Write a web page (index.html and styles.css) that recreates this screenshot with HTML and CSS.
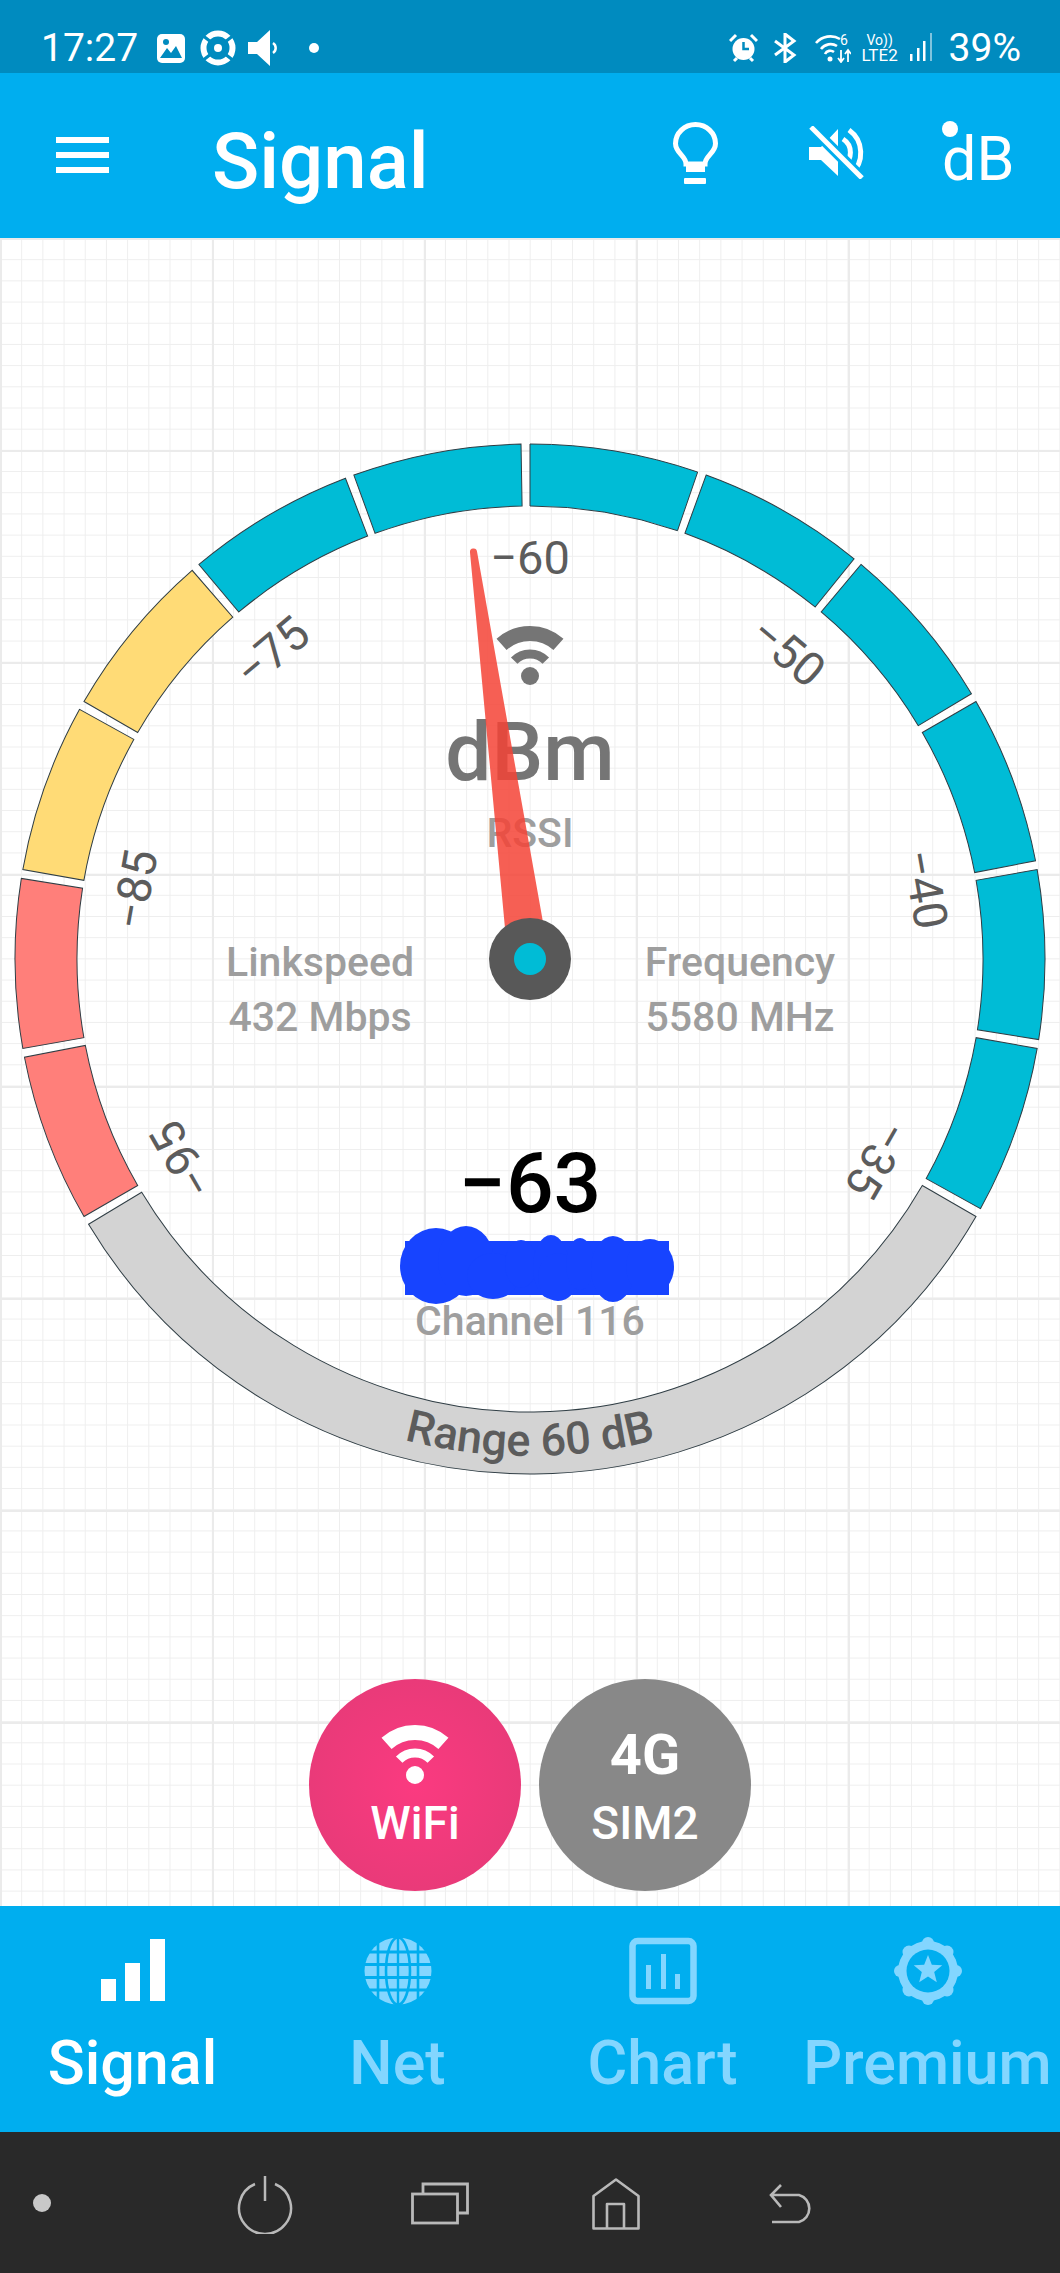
FILE: index.html
```html
<!DOCTYPE html>
<html lang="en">
<head>
    <meta charset="UTF-8">
    <meta name="viewport" content="width=device-width, initial-scale=1.0">
    <title>Signal</title>
    <link rel="stylesheet" href="styles.css">
</head>
<body>
<div class="phone">
    <div class="status-bar">
        <span class="status-time">17:27</span>
        <svg class="st-picture" width="28" height="29" viewBox="0 0 28 29"><rect width="28" height="29" rx="5" fill="#fff"/><path d="M3 24 L10 14 L14 19 L19 12 L25 24 Z" fill="#008bbf"/><circle cx="9" cy="8" r="3" fill="#008bbf"/></svg>
        <svg class="st-target" width="38" height="36" viewBox="0 0 38 36"><circle cx="19" cy="18" r="14.5" fill="none" stroke="#fff" stroke-width="6"/><circle cx="19" cy="18" r="4" fill="#fff"/><path d="M3 5 L12 12 M35 5 L26 12 M3 31 L12 24 M35 31 L26 24" stroke="#008bbf" stroke-width="3"/></svg>
        <svg class="st-speaker" width="32" height="36" viewBox="0 0 32 36"><path d="M0 12 H9 L22 0 V36 L9 24 H0 Z" fill="#fff"/><path d="M25 13 A6 6 0 0 1 25 23" fill="none" stroke="#fff" stroke-width="2.5"/></svg>
        <span class="status-dot"></span>
        <span class="status-spacer"></span>
        <svg class="st-alarm" width="29" height="30" viewBox="0 0 29 30"><circle cx="14.5" cy="16" r="11" fill="#fff"/><path d="M14.5 9 V16 H20" fill="none" stroke="#008bbf" stroke-width="2.5"/><path d="M1 8 L7 2 M28 8 L22 2 M5 28 L8 25 M24 28 L21 25" stroke="#fff" stroke-width="3"/></svg>
        <svg class="st-bluetooth" width="25" height="30" viewBox="0 0 25 30"><path d="M2 8 L21 22 L12 29 V1 L21 8 L2 22" fill="none" stroke="#fff" stroke-width="3"/></svg>
        <svg class="st-wifi" width="36" height="30" viewBox="0 0 36 30"><path d="M1 10 A19 19 0 0 1 25 6 M6 16 A12 12 0 0 1 22 13 M10 21 A6 6 0 0 1 19 19" fill="none" stroke="#fff" stroke-width="2.6"/><circle cx="15" cy="26" r="2.5" fill="#fff"/><path d="M26 17 V28 M23 25 L26 29 L29 25 M33 29 V18 M30 21 L33 17 L36 21" fill="none" stroke="#fff" stroke-width="1.8"/><text x="25" y="12" class="st-six">6</text></svg>
        <span class="st-lte"><span class="st-vo">Vo))</span><span class="st-lte2">LTE2</span></span>
        <svg class="st-bars" width="24" height="30" viewBox="0 0 24 30"><path d="M1 21 H3.5 V28 H1 Z M8 15 H10.5 V28 H8 Z M14 8 H16.5 V28 H14 Z" fill="#fff"/><path d="M21 0 H23 V28 H21 Z" fill="#7fc4de"/></svg>
        <span class="status-battery">39%</span>
    </div>

    <header class="app-bar">
        <div class="menu-icon"><span></span><span></span><span></span></div>
        <h1 class="app-title">Signal</h1>
        <svg class="bulb-icon" width="45" height="62" viewBox="0 0 45 62">
            <path d="M13 42 C13 34 2.5 31 2.5 21.5 A20 19 0 0 1 42.5 21.5 C42.5 31 32 34 32 42 Z" fill="none" stroke="#fff" stroke-width="5"/>
            <rect x="13" y="41" width="19" height="9" fill="#fff"/>
            <rect x="11" y="56" width="22" height="6" rx="1" fill="#fff"/>
        </svg>
        <svg class="mute-icon" width="55" height="53" viewBox="0 0 55 53">
            <path d="M0 21 H12 L29 3 V50 L12 34 H0 Z" fill="#fff"/>
            <path d="M34 13 A16 16 0 0 1 34 40 M40 4 A28 28 0 0 1 42 48" fill="none" stroke="#fff" stroke-width="5"/>
            <path d="M2 1 L53 52" stroke="#00aeef" stroke-width="11"/>
            <path d="M2 1 L53 52" stroke="#fff" stroke-width="5"/>
        </svg>
        <div class="db-toggle"><span class="db-dot"></span>dB</div>
    </header>

    <main class="canvas">
        <svg class="gauge" width="1060" height="1060" viewBox="0 0 1060 1060">
            <defs>
                <path id="seg" d="M530 15 A515 515 0 0 1 697.67 43.06 L677.48 101.68 A453 453 0 0 0 530 77 Z"/>
                <path id="range-seg" d="M530 15 A515 515 0 0 1 980.43 779.68 L926.2 749.62 A453 453 0 0 0 530 77 Z"/>
                <path id="range-curve" d="M33 530 A497 497 0 0 0 1027 530"/>
                <symbol id="wifi-icon" viewBox="0 0 68 60">
                    <path d="M5.56 18.42 A42.5 42.5 0 0 1 62.44 18.42" fill="none" stroke="currentColor" stroke-width="15"/>
                    <path d="M18.2 34.7 A22 22 0 0 1 49.8 34.7" fill="none" stroke="currentColor" stroke-width="9"/>
                    <circle cx="34" cy="50" r="9" fill="currentColor"/>
                </symbol>
            </defs>

            <use href="#seg" class="seg-cyan"/>
            <use href="#seg" class="seg-cyan" transform="rotate(20 530 530)"/>
            <use href="#seg" class="seg-cyan" transform="rotate(40 530 530)"/>
            <use href="#seg" class="seg-cyan" transform="rotate(60 530 530)"/>
            <use href="#seg" class="seg-cyan" transform="rotate(80 530 530)"/>
            <use href="#seg" class="seg-cyan" transform="rotate(100 530 530)"/>
            <use href="#range-seg" class="seg-grey" transform="rotate(120 530 530)"/>
            <use href="#seg" class="seg-red" transform="rotate(240 530 530)"/>
            <use href="#seg" class="seg-red" transform="rotate(260 530 530)"/>
            <use href="#seg" class="seg-yellow" transform="rotate(280 530 530)"/>
            <use href="#seg" class="seg-yellow" transform="rotate(300 530 530)"/>
            <use href="#seg" class="seg-cyan" transform="rotate(320 530 530)"/>
            <use href="#seg" class="seg-cyan" transform="rotate(340 530 530)"/>

            <text class="tick" x="530" y="145">−60</text>
            <text class="tick" x="530" y="145" transform="rotate(40 530 530)">−50</text>
            <text class="tick" x="530" y="145" transform="rotate(80 530 530)">−40</text>
            <text class="tick" x="530" y="145" transform="rotate(120 530 530)">−35</text>
            <text class="tick" x="530" y="145" transform="rotate(240 530 530)">−95</text>
            <text class="tick" x="530" y="145" transform="rotate(280 530 530)">−85</text>
            <text class="tick" x="530" y="145" transform="rotate(320 530 530)">−75</text>

            <text class="range-label"><textPath href="#range-curve" startOffset="50%">Range 60 dB</textPath></text>

            <use href="#wifi-icon" class="gauge-wifi" x="496" y="197" width="68" height="60"/>
            <text class="unit" x="530" y="351">dBm</text>
            <text class="info" x="530" y="418">RSSI</text>
            <text class="info" x="320" y="547">Linkspeed</text>
            <text class="info" x="320" y="602">432 Mbps</text>
            <text class="info" x="740" y="547">Frequency</text>
            <text class="info" x="740" y="602">5580 MHz</text>
            <text class="reading" x="530" y="783">−63</text>

            <!-- scribbled out network name -->
            <g class="scribble">
                <rect x="405" y="812" width="264" height="54"/>
                <ellipse cx="436" cy="837" rx="36" ry="38"/>
                <ellipse cx="466" cy="832" rx="28" ry="35"/>
                <ellipse cx="493" cy="847" rx="26" ry="23"/>
                <ellipse cx="521" cy="835" rx="16" ry="24"/>
                <ellipse cx="551" cy="838" rx="18" ry="32"/>
                <ellipse cx="558" cy="848" rx="20" ry="24"/>
                <ellipse cx="580" cy="835" rx="14" ry="26"/>
                <ellipse cx="613" cy="840" rx="22" ry="33"/>
                <ellipse cx="650" cy="838" rx="24" ry="28"/>
            </g>
            <text class="info" x="530" y="906">Channel 116</text>

            <path class="needle" d="M470 123.5 A3.5 3.5 0 0 1 477 122.5 L546 510 L506 510 Z"/>
            <circle class="hub" cx="530" cy="530" r="41"/>
            <circle class="hub-dot" cx="530" cy="530" r="16"/>
        </svg>

        <div class="modes">
            <div class="mode mode-wifi">
                <svg class="mode-icon" width="68" height="60"><use href="#wifi-icon" width="68" height="60"/></svg>
                <span class="mode-sub">WiFi</span>
            </div>
            <div class="mode mode-sim">
                <span class="mode-big">4G</span>
                <span class="mode-sub">SIM2</span>
            </div>
        </div>
    </main>

    <nav class="tabs">
        <div class="tab tab-active">
            <svg width="68" height="68" viewBox="0 0 68 68"><path d="M2 42 H17 V64 H2 Z M26 26 H41 V64 H26 Z M51 2 H66 V64 H51 Z" fill="currentColor"/></svg>
            <span>Signal</span>
        </div>
        <div class="tab">
            <svg width="68" height="68" viewBox="0 0 68 68">
                <circle cx="34" cy="34" r="33.5" fill="currentColor"/>
                <path d="M0 15 H68 M0 27.5 H68 M0 40.5 H68 M0 53 H68" stroke="#00aeef" stroke-width="3"/>
                <path d="M34 0 V68" stroke="#00aeef" stroke-width="2.4"/>
                <ellipse cx="34" cy="34" rx="12" ry="33.5" fill="none" stroke="#00aeef" stroke-width="2.6"/>
                <path d="M14 0 V68 M54 0 V68" stroke="#00aeef" stroke-width="2.6"/>
            </svg>
            <span>Net</span>
        </div>
        <div class="tab">
            <svg width="68" height="68" viewBox="0 0 68 68">
                <rect x="3.5" y="4" width="61" height="60" rx="5" fill="none" stroke="currentColor" stroke-width="6.5"/>
                <path d="M17 28 H22 V52 H17 Z M32 17 H37 V52 H32 Z M46 37 H51 V52 H46 Z" fill="currentColor"/>
            </svg>
            <span>Chart</span>
        </div>
        <div class="tab">
            <svg width="68" height="68" viewBox="0 0 68 68">
                <g fill="currentColor">
                    <circle cx="34" cy="34" r="30"/>
                    <circle cx="34" cy="6" r="6"/>
                    <circle cx="53" cy="15" r="6.5"/>
                    <circle cx="62" cy="34" r="6"/>
                    <circle cx="53" cy="53" r="6.5"/>
                    <circle cx="34" cy="62" r="6"/>
                    <circle cx="15" cy="53" r="6.5"/>
                    <circle cx="6" cy="34" r="6"/>
                    <circle cx="15" cy="15" r="6.5"/>
                </g>
                <circle cx="34" cy="34" r="21.5" fill="#00aeef"/>
                <path d="M34 18 L37.82 27.74 L48.27 28.36 L40.18 35.01 L42.82 45.14 L34 39.5 L25.18 45.14 L27.82 35.01 L19.73 28.36 L30.18 27.74 Z" fill="currentColor"/>
            </svg>
            <span>Premium</span>
        </div>
    </nav>

    <div class="nav-bar">
        <span class="nav-dot"></span>
        <svg class="nav-power" width="56" height="58" viewBox="0 0 56 58"><path d="M18 8 A26 26 0 1 0 38 8 M28 0 V25" fill="none" stroke="#b9b9b9" stroke-width="2.5"/></svg>
        <svg class="nav-recent" width="58" height="43" viewBox="0 0 58 43"><rect x="1.5" y="12" width="45" height="29" fill="none" stroke="#b9b9b9" stroke-width="2.8"/><path d="M12 11 V2 H56.5 V31 H47" fill="none" stroke="#b9b9b9" stroke-width="2.8"/></svg>
        <svg class="nav-home" width="48" height="52" viewBox="0 0 48 52"><path d="M1.5 50.5 V18 L24 1.5 L46.5 18 V50.5 Z M15 50.5 V26 H32 V50.5" fill="none" stroke="#b9b9b9" stroke-width="2.6" stroke-linejoin="round"/></svg>
        <svg class="nav-back" width="48" height="40" viewBox="0 0 48 40"><path d="M3 38 H30 A14 14 0 0 0 30 11 H2 M12 1 L2 11 L12 23" fill="none" stroke="#b9b9b9" stroke-width="2.6"/></svg>
    </div>
</div>
</body>
</html>
```

FILE: styles.css
```css
* {
    box-sizing: border-box;
}
body {
    margin: 0;
    font-family: Roboto, "Noto Sans", sans-serif;
    background-color: #fff;
}
.phone {
    display: flex;
    flex-direction: column;
    width: 1060px;
    height: 2273px;
    overflow: hidden;
}

/* status bar */
.status-bar {
    display: flex;
    align-items: center;
    height: 73px;
    padding: 23px 39px 0 41px;
    background-color: #008bbf;
    color: #fff;
}
.status-time {
    font-size: 39px;
    line-height: 50px;
}
.st-picture {
    margin-left: 19px;
}
.st-target {
    margin-left: 14px;
}
.st-speaker {
    margin-left: 11px;
}
.status-dot {
    width: 10px;
    height: 10px;
    margin-left: 29px;
    border-radius: 50%;
    background-color: #fff;
}
.status-spacer {
    flex: 1;
}
.st-bluetooth {
    margin-left: 15px;
}
.st-wifi {
    margin-left: 17px;
}
.st-six {
    font-size: 14px;
    fill: #fff;
}
.st-lte {
    display: flex;
    flex-direction: column;
    align-items: center;
    width: 40px;
    margin-left: 9px;
    font-size: 17px;
    line-height: 15px;
}
.st-vo {
    font-size: 14px;
}
.st-bars {
    margin-left: 9px;
}
.status-battery {
    margin-left: 16px;
    font-size: 39px;
    line-height: 50px;
}

/* app bar */
.app-bar {
    display: flex;
    align-items: center;
    height: 165px;
    padding-top: 12px;
    background-color: #00aeef;
    color: #fff;
}
.menu-icon {
    display: flex;
    flex-direction: column;
    gap: 8.5px;
    width: 53px;
    margin-left: 56px;
    margin-top: -13px;
}
.menu-icon span {
    height: 6.5px;
    background-color: #fff;
}
.app-title {
    flex: 1;
    margin: 0 0 0 103px;
    font-size: 78px;
    font-weight: 500;
    line-height: 90px;
}
.bulb-icon {
    margin-top: -17px;
}
.mute-icon {
    margin-left: 91px;
    margin-top: -19px;
}
.db-toggle {
    position: relative;
    width: 71px;
    margin-left: 78px;
    margin-right: 47px;
    margin-top: -5px;
    font-size: 61px;
    line-height: 70px;
    font-weight: 400;
}
.db-dot {
    position: absolute;
    left: 0;
    top: -3px;
    width: 16px;
    height: 16px;
    border-radius: 50%;
    background-color: #fff;
}

/* gauge */
.canvas {
    display: flex;
    flex-direction: column;
    flex: 1;
    background-color: #fff;
    background-image:
        linear-gradient(#ebebeb 2px, transparent 2px),
        linear-gradient(90deg, #ebebeb 2px, transparent 2px),
        linear-gradient(#eeeeee 1px, transparent 1px),
        linear-gradient(90deg, #eeeeee 1px, transparent 1px);
    background-size: 212px 212px, 212px 212px, 21.2px 21.2px, 21.2px 21.2px;
}
.gauge {
    display: block;
    flex: none;
    margin-top: 191px;
}
.gauge text {
    font-family: Roboto, sans-serif;
    text-anchor: middle;
}
.seg-cyan,
.seg-yellow,
.seg-red,
.seg-grey {
    stroke: #2f3d44;
    stroke-width: 1;
}
.seg-cyan {
    fill: #00bcd6;
}
.seg-yellow {
    fill: #ffdb76;
}
.seg-red {
    fill: #ff7f7a;
}
.seg-grey {
    fill: #d3d3d3;
}
.tick {
    font-size: 47px;
    fill: #5c5c5c;
}
.range-label {
    font-size: 45px;
    font-weight: 500;
    fill: #5c5c5c;
}
.gauge-wifi {
    color: #757575;
}
.unit {
    font-size: 82px;
    font-weight: 500;
    fill: #757575;
}
.info {
    font-size: 41px;
    font-weight: 500;
    fill: #9e9e9e;
}
.reading {
    font-size: 84px;
    font-weight: 500;
    fill: #000;
}
.scribble {
    fill: #1744ff;
}
.needle {
    fill: rgba(244, 67, 54, 0.85);
}
.hub {
    fill: #585858;
}
.hub-dot {
    fill: #00bcd6;
}

/* wifi / sim buttons */
.modes {
    display: flex;
    justify-content: center;
    gap: 18px;
    margin-top: 190px;
}
.mode {
    display: flex;
    flex-direction: column;
    align-items: center;
    justify-content: center;
    gap: 12px;
    width: 212px;
    height: 212px;
    padding-top: 4px;
    border-radius: 50%;
    color: #fff;
}
.mode-wifi {
    background: radial-gradient(circle, #fb3a80 0%, #e23a76 100%);
}
.mode-sim {
    background-color: #888;
}
.mode-icon {
    display: block;
}
.mode-big {
    font-size: 56px;
    font-weight: 700;
    line-height: 60px;
}
.mode-sub {
    font-size: 46px;
    font-weight: 500;
    line-height: 52px;
}

/* bottom tabs */
.tabs {
    display: grid;
    grid-template-columns: repeat(4, 1fr);
    flex: none;
    height: 226px;
    padding-top: 31px;
    background-color: #00aeef;
}
.tab {
    display: flex;
    flex-direction: column;
    align-items: center;
    color: #83d6ff;
    font-size: 61px;
    font-weight: 500;
    line-height: 70px;
}
.tab svg {
    display: block;
    margin-bottom: 23px;
}
.tab-active {
    color: #fff;
}

/* android nav */
.nav-bar {
    position: relative;
    flex: none;
    height: 141px;
    background-color: #292929;
}
.nav-bar svg,
.nav-dot {
    position: absolute;
}
.nav-dot {
    left: 33px;
    top: 62px;
    width: 18px;
    height: 18px;
    border-radius: 50%;
    background-color: #c8c8c8;
}
.nav-power {
    left: 237px;
    top: 44px;
}
.nav-recent {
    left: 411px;
    top: 50px;
}
.nav-home {
    left: 592px;
    top: 46px;
}
.nav-back {
    left: 769px;
    top: 52px;
}
```
